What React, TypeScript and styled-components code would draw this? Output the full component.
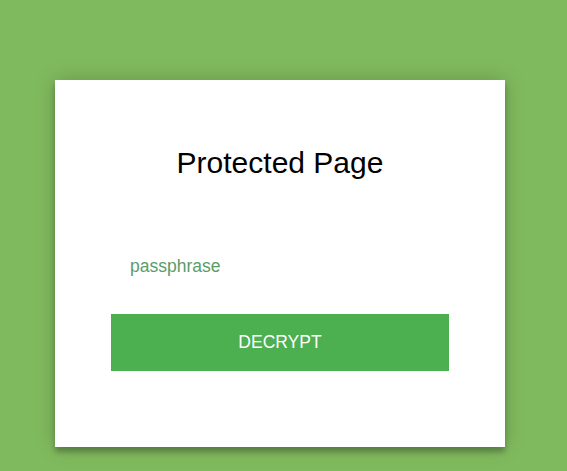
import styled, { createGlobalStyle } from "styled-components";

const GlobalStyle = createGlobalStyle`
  html, body {
    margin: 0;
    padding: 0;
    background: #80ba5e;
    font-family: "Liberation Sans", Arial, sans-serif;
  }
`;

const Page = styled.div`
  min-height: 471px;
  padding: 80px 0 0 55px;
  box-sizing: border-box;
`;

const Card = styled.form`
  width: 450px;
  box-sizing: border-box;
  padding: 65px 56px 76px;
  background: #fff;
  box-shadow: 0 0 20px 0 rgba(0, 0, 0, 0.2), 0 5px 5px 0 rgba(0, 0, 0, 0.24);
  display: flex;
  flex-direction: column;
`;

const Title = styled.h1`
  margin: 0;
  font-size: 30px;
  font-weight: 400;
  line-height: 36px;
  text-align: center;
  color: #000;
`;

const Input = styled.input`
  margin-top: 61px;
  height: 48px;
  padding: 0 19px;
  border: 0;
  outline: none;
  background: #fff;
  font-family: inherit;
  font-size: 17.5px;
  color: #333;

  &::placeholder {
    color: #5c9c69;
  }
`;

const Button = styled.button`
  margin-top: 24px;
  height: 57px;
  border: 0;
  background: #4caf50;
  color: #fff;
  font-family: inherit;
  font-size: 17.5px;
  text-transform: uppercase;
  cursor: pointer;
`;

const App = () => {
  return (
    <>
      <GlobalStyle />
      <Page>
        <Card onSubmit={(e) => e.preventDefault()}>
          <Title>Protected Page</Title>
          <Input type="password" placeholder="passphrase" />
          <Button type="submit">Decrypt</Button>
        </Card>
      </Page>
    </>
  );
};

export default App;
